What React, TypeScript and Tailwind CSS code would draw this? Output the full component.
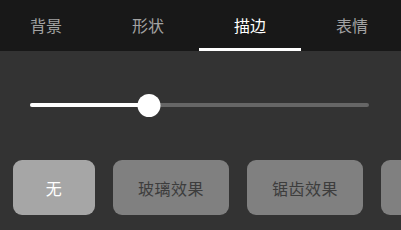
import React from 'react'

const tabs = ['背景', '形状', '描边', '表情']
const effects = [
  { label: '无', active: true, w: 'w-[82px]' },
  { label: '玻璃效果', active: false, w: 'w-[116px]' },
  { label: '锯齿效果', active: false, w: 'w-[116px]' },
  { label: '', active: false, w: 'w-[116px]' },
]

export default function App() {
  const value = 0.35
  return (
    <div
      className="w-[401px] h-[230px] overflow-hidden bg-[#333333] flex flex-col"
      style={{ fontFamily: '"Noto Sans CJK SC", "Noto Sans", sans-serif' }}
    >
      <div className="h-[51px] bg-[#181818] flex shrink-0 overflow-hidden">
        <div className="flex -ml-[5px]">
          {tabs.map((t, i) => (
            <div key={t} className="relative w-[102px] shrink-0 flex items-center justify-center">
              <span className={`text-[16px] leading-none -mt-[1px] ${i === 2 ? 'text-white' : 'text-[#a3a3a3]'}`}>{t}</span>
              {i === 2 && <div className="absolute left-0 right-0 bottom-0 h-[3px] bg-white" />}
            </div>
          ))}
        </div>
      </div>

      <div className="px-[30px] pt-[42px]">
        <div className="relative h-[24px] w-[339px] flex items-center">
          <div className="h-[4px] w-full rounded-full bg-[#666666]" />
          <div className="absolute left-0 h-[4px] rounded-full bg-white" style={{ width: `${value * 100}%` }} />
          <div
            className="absolute w-[23px] h-[23px] rounded-full bg-white -translate-x-1/2"
            style={{ left: `${value * 100}%` }}
          />
        </div>
      </div>

      <div className="flex gap-[18px] pl-[13px] pt-[43px]">
        {effects.map((e, i) => (
          <div
            key={i}
            className={`${e.w} h-[55px] shrink-0 rounded-[9px] flex items-center justify-center text-[16px] ${
              e.active ? 'bg-[#a6a6a6] text-white' : 'bg-[#808080] text-[#3d3d3d]'
            }`}
          >
            <span className="tracking-[0.5px]">{e.label}</span>
          </div>
        ))}
      </div>
    </div>
  )
}
